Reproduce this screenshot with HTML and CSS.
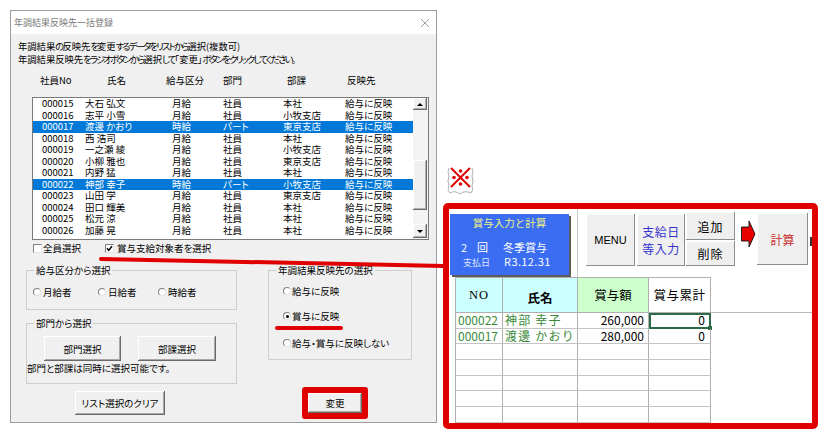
FILE: index.html
```html
<!DOCTYPE html>
<html lang="ja">
<head>
<meta charset="utf-8">
<title>年調結果反映先一括登録</title>
<link rel="stylesheet" href="styles.css">
</head>
<body>
<div class="page">
  <div class="dialog">
    <div class="titlebar">
      <span class="title">年調結果反映先一括登録</span>
      <svg class="close" width="10" height="10" viewBox="0 0 10 10"><path d="M1 1L9 9M9 1L1 9" stroke="#a0a0a0" stroke-width="1" fill="none"/></svg>
    </div>
    <div class="dbody">
      <p class="instr">年調結果<span class="k">の</span>反映先<span class="k">を</span>変更<span class="k">するデータをリストから</span>選択(複数可)<br>年調結果反映先<span class="k">をラジオボタンから</span>選択<span class="k">して</span>「変更」<span class="k">ボタンをクリックしてください</span>。</p>
      <div class="lhead"><span>社員No</span><span>氏名</span><span>給与区分</span><span>部門</span><span>部課</span><span>反映先</span></div>
      <div class="listbox">
        <div class="rows">
          <div class="row"><span>000015</span><span>大石 弘文</span><span>月給</span><span>社員</span><span>本社</span><span>給与に反映</span></div>
          <div class="row"><span>000016</span><span>志平 小雪</span><span>月給</span><span>社員</span><span>小牧支店</span><span>給与に反映</span></div>
          <div class="row sel"><span>000017</span><span>渡邊 かおり</span><span>時給</span><span>パート</span><span>東京支店</span><span>給与に反映</span></div>
          <div class="row"><span>000018</span><span>西 浩司</span><span>月給</span><span>社員</span><span>本社</span><span>給与に反映</span></div>
          <div class="row"><span>000019</span><span>一之瀬 綾</span><span>月給</span><span>社員</span><span>小牧支店</span><span>給与に反映</span></div>
          <div class="row"><span>000020</span><span>小柳 雅也</span><span>月給</span><span>社員</span><span>東京支店</span><span>給与に反映</span></div>
          <div class="row"><span>000021</span><span>内野 猛</span><span>月給</span><span>社員</span><span>本社</span><span>給与に反映</span></div>
          <div class="row sel"><span>000022</span><span>神部 幸子</span><span>時給</span><span>パート</span><span>小牧支店</span><span>給与に反映</span></div>
          <div class="row"><span>000023</span><span>山田 学</span><span>月給</span><span>社員</span><span>東京支店</span><span>給与に反映</span></div>
          <div class="row"><span>000024</span><span>田口 輝美</span><span>月給</span><span>社員</span><span>本社</span><span>給与に反映</span></div>
          <div class="row"><span>000025</span><span>松元 涼</span><span>月給</span><span>社員</span><span>本社</span><span>給与に反映</span></div>
          <div class="row"><span>000026</span><span>加藤 晃</span><span>月給</span><span>社員</span><span>本社</span><span>給与に反映</span></div>
        </div>
        <div class="vscroll">
          <div class="sbtn"><span class="tri-up"></span></div>
          <div class="strack"><div class="thumb"></div></div>
          <div class="sbtn down"><span class="tri-down"></span></div>
        </div>
      </div>
      <div class="checkrow">
        <label class="chk first"><span class="box"></span>全員選択</label>
        <label class="chk"><span class="box"><svg width="7" height="7" viewBox="0 0 7 7"><path d="M1 3.3L2.8 5.3L6 1.3" stroke="#000" stroke-width="1.4" fill="none"/></svg></span>賞与支給対象者を選択</label>
      </div>
      <div class="lower">
        <div class="lcol">
          <fieldset class="grp">
            <legend>給与区分から選択</legend>
            <div class="radios">
              <span class="rad w1"><span class="circ"></span>月給者</span>
              <span class="rad w2"><span class="circ"></span>日給者</span>
              <span class="rad"><span class="circ"></span>時給者</span>
            </div>
          </fieldset>
          <fieldset class="grp grp2">
            <legend>部門から選択</legend>
            <div class="g2body">
              <div class="btnrow">
                <button class="btn b1">部門選択</button>
                <button class="btn b2">部課選択</button>
              </div>
              <p class="note">部門と部課は同時に選択可能です。</p>
            </div>
          </fieldset>
          <button class="btn clear">リスト選択のクリア</button>
        </div>
        <div class="rcol">
          <fieldset class="grp">
            <legend>年調結果反映先の選択</legend>
            <div class="g3body">
              <div class="rad r1"><span class="circ"></span>給与に反映</div>
              <div class="rad r2"><span class="circ on"></span>賞与に反映</div>
              <div class="rad r3"><span class="circ"></span>給与・賞与に反映しない</div>
            </div>
          </fieldset>
          <div class="redbox"><button class="btn change">変更</button></div>
        </div>
      </div>
    </div>
  </div>

  <div class="right">
    <svg class="mark" width="30" height="34" viewBox="0 0 30 34">
      <path d="M3 3 Q1 7 3 11 Q1 16 3 21 Q1 26 4 28 Q9 25 14 29 Q19 25 25 28 Q28 25 26 21 Q28 16 26 11 Q28 7 26 3" stroke="#b0b0b0" stroke-width="1" fill="none"/>
      <path d="M5 3L24 22M24 3L5 22" stroke="#e00000" stroke-width="2"/>
      <circle cx="14.5" cy="6" r="1.8" fill="#e00000"/>
      <circle cx="14.5" cy="19" r="1.8" fill="#e00000"/>
      <circle cx="8" cy="12.5" r="1.8" fill="#e00000"/>
      <circle cx="21" cy="12.5" r="1.8" fill="#e00000"/>
    </svg>
    <div class="frame">
      <div class="toprow">
        <div class="bluebox">
          <div class="bt">賞与入力と計算</div>
          <div class="bl2"><span class="n">2</span><span class="kai">回</span><span>冬季賞与</span></div>
          <div class="bl3"><span class="pay">支払日</span><span class="date">R3.12.31</span></div>
        </div>
        <div class="tools">
          <div class="xbtn menu">MENU</div>
          <div class="xbtn pday">支給日<br>等入力</div>
          <div class="stack">
            <div class="xbtn add">追加</div>
            <div class="xbtn del">削除</div>
          </div>
          <svg class="arrow" width="15" height="28" viewBox="0 0 15 28"><path d="M0.5 7 H8 V1 L14 14 L8 27 V21 H0.5 Z" fill="#e80000" stroke="#111" stroke-width="0.9"/></svg>
          <div class="xbtn calc">計算</div>
          <div class="bar"></div>
        </div>
      </div>
      <div class="sheet">
        <div class="hrow">
          <div class="c c1 h cyan no">NO</div>
          <div class="c c2 h cyan name">氏名</div>
          <div class="c c3 h green">賞与額</div>
          <div class="c c4 h">賞与累計</div>
          <div class="hfill"></div>
        </div>
        <div class="drow"><div class="c c1 g">000022</div><div class="c c2 g nm">神部 幸子</div><div class="c c3 num">260,000</div><div class="c c4 num active">0</div></div>
        <div class="drow"><div class="c c1 g">000017</div><div class="c c2 g nm">渡邊 かおり</div><div class="c c3 num">280,000</div><div class="c c4 num">0</div></div>
        <div class="drow"><div class="c c1"></div><div class="c c2"></div><div class="c c3"></div><div class="c c4"></div></div>
        <div class="drow"><div class="c c1"></div><div class="c c2"></div><div class="c c3"></div><div class="c c4"></div></div>
        <div class="drow"><div class="c c1"></div><div class="c c2"></div><div class="c c3"></div><div class="c c4"></div></div>
        <div class="drow"><div class="c c1"></div><div class="c c2"></div><div class="c c3"></div><div class="c c4"></div></div>
        <div class="drow"><div class="c c1"></div><div class="c c2"></div><div class="c c3"></div><div class="c c4"></div></div>
      </div>
    </div>
  </div>

  <svg class="annot" width="824" height="440" viewBox="0 0 824 440">
    <path d="M101 259 L444 266" stroke="#e00000" stroke-width="4" stroke-linecap="round" fill="none"/>
    <path d="M277 328 L341 328" stroke="#e00000" stroke-width="4" stroke-linecap="round" fill="none"/>
  </svg>
</div>
</body>
</html>
```
FILE: styles.css
```css
* { box-sizing: border-box; margin: 0; padding: 0; }
html, body { width: 824px; height: 440px; overflow: hidden; background: #fff; }
body { font-family: "Noto Sans CJK JP", "Noto Sans", sans-serif; color: #000; }

.page { position: relative; display: flex; align-items: flex-start; width: 824px; height: 440px; }

/* dialog */
.dialog {
  margin: 10px 0 0 10px; width: 427px; height: 413px;
  border: 1px solid #9c9c9c; background: #f0f0f0;
  display: flex; flex-direction: column;
  font-size: 9.5px; font-feature-settings: "palt";
}
.titlebar {
  height: 23px; flex: none; background: #fff;
  display: flex; align-items: center; justify-content: space-between;
  padding: 0 6px 0 3px; color: #7a7a7a; font-size: 9px;
}
.close { display: block; }
.dbody { padding: 6px 0 0 7px; }
.instr { line-height: 13px; white-space: nowrap; font-size: 9.3px; }
.instr .k { letter-spacing: -1.8px; }
.lhead {
  margin: 8px 0 0 14px; padding-left: 8px; line-height: 13px;
  display: grid; grid-template-columns: 67px 59px 57px 64px 60px auto;
}
.listbox {
  margin: 10px 0 0 14px; width: 397px; height: 143px;
  border: 1px solid #7a7a7a; background: #fff; display: flex;
}
.rows { flex: 1; }
.row {
  display: grid; grid-template-columns: 43px 87px 51px 60px 62px auto;
  padding-left: 9px; height: 11.5px; line-height: 11.5px; white-space: nowrap;
}
.row.sel { background: #0078d7; color: #fff; }
.vscroll { width: 15px; display: flex; flex-direction: column; background: #f4f4f4; padding-right: 1px; padding-bottom: 1px; }
.sbtn {
  height: 12px; background: #f0f0f0; display: flex; align-items: center; justify-content: center;
  box-shadow: inset -1px -1px 0 #6a6a6a, inset 1px 1px 0 #fff, inset -2px -2px 0 #b0b0b0;
}
.sbtn.down { height: 14px; }
.tri-up { width: 0; height: 0; border-left: 3px solid transparent; border-right: 3px solid transparent; border-bottom: 3px solid #000; }
.tri-down { width: 0; height: 0; border-left: 3px solid transparent; border-right: 3px solid transparent; border-top: 3px solid #000; }
.strack { flex: 1; }
.thumb {
  margin-top: 50px; height: 50px; background: #f0f0f0;
  box-shadow: inset -1px -1px 0 #6a6a6a, inset 1px 1px 0 #fff, inset -2px -2px 0 #b0b0b0;
}

.checkrow { margin: 2px 0 0 15px; display: flex; line-height: 12px; }
.chk { display: inline-flex; align-items: center; }
.chk.first { width: 72px; }
.box {
  width: 9px; height: 9px; background: #fff; margin-right: 3px;
  border: 1px solid; border-color: #808080 #e6e6e6 #e6e6e6 #808080;
  display: inline-flex; align-items: center; justify-content: center;
}
.chk.first .box { margin-right: 1px; }
.box svg { display: block; }

.lower { display: flex; margin: 10px 0 0 8px; }
.lcol { width: 211px; }
.rcol { width: 144px; margin-left: 31px; }
.grp { border: 1px solid #cdcdcd; padding: 0; min-width: 0; }
.grp legend { margin-left: 7px; padding: 0 2px; line-height: 12px; }
.radios { display: flex; padding: 10px 0 11px 6px; line-height: 12px; }
.rad { display: flex; align-items: center; line-height: 12px; }
.rad.w1 { width: 65px; }
.rad.w2 { width: 60px; }
.circ {
  width: 8px; height: 8px; border-radius: 50%; background: #fff; margin-right: 2px;
  border: 1px solid; border-color: #808080 #e0e0e0 #e0e0e0 #808080;
  display: inline-flex; align-items: center; justify-content: center;
}
.circ.on::after { content: ""; width: 3px; height: 3px; border-radius: 50%; background: #000; }
.grp2 { margin-top: 7px; }
.g2body { padding: 7px 0 9px 0; }
.btnrow { display: flex; padding-left: 17px; gap: 17px; }
.btn {
  font: inherit; font-feature-settings: "palt"; color: #000; background: #f0f0f0; border: none;
  box-shadow: inset -1px -1px 0 #6a6a6a, inset 1px 1px 0 #fff, inset -2px -2px 0 #a8a8a8;
  display: flex; align-items: center; justify-content: center;
}
.b1 { width: 77px; height: 25px; }
.b2 { width: 78px; height: 25px; }
.note { margin-top: 1px; line-height: 12px; }
.clear { margin: 7px 0 0 49px; width: 90px; height: 24px; }
.g3body { padding: 9px 0 10px 14px; }
.g3body .circ { margin-right: 1px; }
.r2 { margin-top: 13px; }
.r3 { margin-top: 15px; }
.redbox {
  margin: 27px 0 0 34px; width: 66px; height: 32px;
  border: 6px solid #e00000; border-radius: 3px; display: flex;
}
.change { flex: 1; }

/* right panel */
.right { margin-left: 6px; width: 375px; display: flex; flex-direction: column; }
.mark { display: block; margin: 165px 0 0 3px; }
.frame {
  margin-top: 4px; width: 375px; height: 226px;
  border: 6px solid #e00000; border-radius: 5px; background: #fff; overflow: hidden;
  font-family: "Noto Sans CJK JP", sans-serif;
}
.toprow { display: flex; height: 68px; }
.bluebox {
  margin: 5px 0 0 1px; width: 119px; height: 61px; flex: none;
  background: #3b6df2; color: #fff; box-shadow: 2px 2px 0 #5c5c5c;
}
.bt { margin-top: 2px; line-height: 14px; text-align: center; color: #eef27c; font-size: 10.5px; }
.bl2 { margin-top: 10px; padding-left: 11px; line-height: 14px; font-size: 11px; display: flex; }
.bl2 .n { width: 16px; }
.bl2 .kai { width: 26px; }
.bl3 { padding-left: 13px; line-height: 14px; display: flex; align-items: baseline; }
.pay { width: 41px; font-size: 9px; color: #dfe6ff; }
.date { font-size: 11px; letter-spacing: 0.4px; }
.tools { margin-left: 8px; border-left: 1px solid #c6c6c6; flex: 1; display: flex; align-items: flex-start; padding-left: 8px; }
.xbtn {
  background: #efefef; display: flex; align-items: center; justify-content: center; text-align: center;
  box-shadow: inset -1px -1px 0 #8c8c8c, inset 1px 1px 0 #fff;
  font-size: 12px;
}
.menu { margin-top: 5px; width: 49px; height: 52px; font-family: "Liberation Sans", sans-serif; font-size: 11px; }
.pday { margin: 5px 0 0 2px; width: 48px; height: 52px; color: #3333cc; font-size: 12px; line-height: 17px; letter-spacing: 0.5px; }
.stack { margin: 3px 0 0 1px; width: 49px; }
.add { height: 28px; letter-spacing: 1px; }
.del { margin-top: 1px; height: 25px; letter-spacing: 1px; }
.arrow { display: block; margin: 11px 0 0 6px; flex: none; }
.calc { margin: 4px 0 0 1px; width: 51px; height: 52px; color: #cc2a2a; }
.bar { margin: 28px 0 0 2px; width: 3px; height: 9px; background: #333; }

.sheet { margin-left: 6px; font-size: 12px; }
.hrow { display: flex; height: 36px; }
.hfill { flex: 1; border-bottom: 1px solid #b8b8b8; }
.drow { display: flex; height: 15.7px; }
.c { border-right: 1px solid #b0b0b0; border-bottom: 1px solid #c4c4c4; line-height: 14.7px; white-space: nowrap; position: relative; }
.hrow .c { border-top: 1px solid #b0b0b0; border-bottom: 1px solid #b0b0b0; display: flex; align-items: center; justify-content: center; font-size: 12.5px; }
.c1 { width: 48px; border-left: 1px solid #b0b0b0; }
.c2 { width: 75px; }
.c3 { width: 71px; }
.c4 { width: 62px; }
.cyan { background: #ccffff; }
.green { background: #ccffcc; }
.no { font-family: "Liberation Serif", serif; font-size: 14px; letter-spacing: 1px; }
.name { font-weight: bold; align-items: flex-start; padding-top: 6px; }
.h.c4 { letter-spacing: 0.5px; }
.g { color: #3a8a3a; padding-left: 2px; }
.nm { letter-spacing: 1.2px; }
.num { text-align: right; padding-right: 4px; }
.c4.num { padding-right: 5px; }
.active { outline: 2px solid #2d6a48; outline-offset: -2px; }
.active::after { content: ""; position: absolute; right: -2px; bottom: -2px; width: 4px; height: 4px; background: #2d6a48; }

.annot { position: absolute; left: 0; top: 0; pointer-events: none; }
```
